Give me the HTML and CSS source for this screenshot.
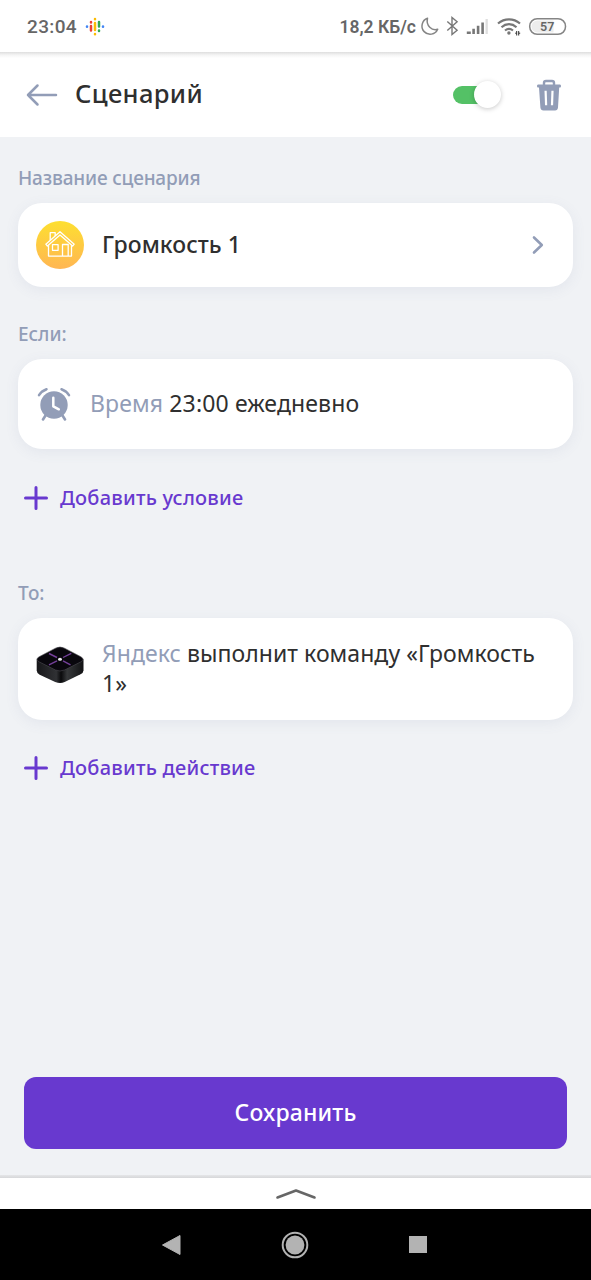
FILE: index.html
```html
<!DOCTYPE html>
<html lang="ru">
<head>
<meta charset="utf-8">
<title>Сценарий</title>
<link rel="stylesheet" href="styles.css">
</head>
<body>
<div class="screen">
  <div class="status">
    <span class="clock">23:04</span>
    <svg class="assistant" width="20" height="20" viewBox="0 0 20 20" fill="none" stroke-width="2.500" stroke-linecap="round">
      <path d="M2 9.500v.2" stroke="#4285f4"/><path d="M18 9.500v.2" stroke="#4285f4"/>
      <path d="M6 5v.5M6 9v4.500" stroke="#e94235"/>
      <path d="M10 2v.2M10 6v7M10 17v.2" stroke="#fbbc04"/>
      <path d="M14 5v4.500M14 13.400v.5" stroke="#34a853"/>
    </svg>
    <span class="speed">18,2 КБ/с</span>
    <svg class="sysicons" width="150" height="24" viewBox="418 15 150 24" fill="none">
      <path d="M427.500 18.300a8.200 8.200 0 1 0 10.200 11c-5.800 1.800-12-3.500-10.200-11z" stroke="#858585" stroke-width="1.500" stroke-linejoin="round"/>
      <path d="M447.300 21.500l9.800 8.700-5.100 4.300v-17l5.100 4.300-9.800 8.700" stroke="#777" stroke-width="1.400"/>
      <path d="M466.800 31.500h4v2.500h-4zM472.300 28.800h2.600v5.200h-2.600zM476.800 25.800h2.600v8.200h-2.600zM481.300 22.500h2.600v11.500h-2.600z" fill="#777"/>
      <path d="M485.500 19h2.300v15h-2.300z" fill="#dedede"/>
      <g stroke="#777" stroke-width="2.200"><path d="M498 23.500c6.500-5.500 15.500-5.500 22 0"/><path d="M501.500 27.200c4.500-4 10.500-4 15 0"/><path d="M505 30.500c2.700-2.200 5.300-2.200 8 0"/></g>
      <circle cx="508.900" cy="33" r="1.700" fill="#777"/>
      <path d="M516.700 31v4.500M518.700 31v4.500M515.200 33.200h1.500M518.700 33.200h1.500" stroke="#333" stroke-width="1"/>
      <rect x="529.700" y="18.700" width="35.800" height="15.600" rx="7.500" fill="#fff" stroke="#858585" stroke-width="1.500"/>
      <path d="M531.500 26.500a6 6 0 0 1 6-6h16v12h-16a6 6 0 0 1-6-6z" fill="#ededed"/>
      <text class="battery" x="547.200" y="31.300" text-anchor="middle">57</text>
    </svg>
  </div>

  <header class="appbar">
    <svg class="back" width="32" height="24" viewBox="0 0 32 24" fill="none" stroke="#929db7" stroke-width="2.500" stroke-linecap="round" stroke-linejoin="round"><path d="M30 12H2M11.500 2.500L2 12l9.500 9.500"/></svg>
    <h1 class="title">Сценарий</h1>
    <div class="switch"><div class="knob"></div></div>
    <svg class="trash" width="26" height="32" viewBox="0 0 26 32" fill="none">
      <path d="M8 6V3.800Q8 2 10 2h6q2 0 2 1.800V6" stroke="#929db7" stroke-width="2.400"/>
      <path d="M2 5.500h22q1 0 1 1.500t-1 1.500h-.8L22 28.500Q21.700 31.500 19 31.500H7.500Q4.700 31.500 4.400 28.500L3 8.500h-1q-1 0-1-1.500t1-1.500z" fill="#929db7"/>
      <path d="M9.600 11.800l.5 14.500M16.500 11.800l-.5 14.500" stroke="#fff" stroke-width="2.200"/>
    </svg>
  </header>

  <main class="content">
    <p class="label label-name">Название сценария</p>
    <section class="card card-name">
      <svg class="house" width="48" height="48" viewBox="0 0 48 48" fill="none">
        <defs><linearGradient id="sun" x1="0" y1="0" x2="0" y2="1"><stop offset="0" stop-color="#fddf30"/><stop offset="1" stop-color="#ffb653"/></linearGradient></defs>
        <circle cx="24" cy="24" r="24" fill="url(#sun)"/>
        <g stroke="#fff" stroke-width="1.300" stroke-linejoin="round">
          <path d="M12.500 24.300v10.800h23V24.300M14.200 19V11.700h5v3.200"/>
          <path d="M24 10.800L9.800 23.200l1.600 1.900L24 14l12.600 11.100 1.600-1.900z"/>
          <path d="M16.500 23.700h5.600v5.600h-5.600zM26.500 35V23.500h5.700V35"/>
        </g>
      </svg>
      <span class="name">Громкость 1</span>
      <svg class="chevron" width="14" height="20" viewBox="0 0 14 20" fill="none" stroke="#929db7" stroke-width="2.600" stroke-linecap="round" stroke-linejoin="round"><path d="M3 2.500l7.800 7.500L3 17.500"/></svg>
    </section>

    <p class="label label-if">Если:</p>
    <section class="card card-if">
      <svg class="alarm" width="34" height="34" viewBox="0 0 34 34" fill="none" stroke="#929db7" stroke-linecap="round">
        <circle cx="17" cy="18" r="13.700" fill="#929db7" stroke="none"/>
        <path d="M2 8.200Q4.500 4 9.500 2.200M32 8.200Q29.500 4 24.500 2.200" stroke-width="2.500"/>
        <path d="M8.500 28.500L6 32.500M25.500 28.500l2.500 4" stroke-width="2.600"/>
        <path d="M16.300 10.700v8.600l5.500 3" stroke="#fff" stroke-width="2.500" stroke-linejoin="round"/>
      </svg>
      <p class="body"><span class="muted">Время</span> <span>23:00 ежедневно</span></p>
    </section>
    <div class="add add-if">
      <svg class="plus" width="24" height="24" viewBox="0 0 24 24" stroke="#6839cf" stroke-width="3" stroke-linecap="round"><path d="M12 1.500v21M1.500 12h21"/></svg>
      <span class="add-text">Добавить условие</span>
    </div>

    <p class="label label-then">То:</p>
    <section class="card card-then">
      <svg class="station" width="48" height="38" viewBox="0 0 48 38">
        <defs><linearGradient id="side" x1="0" y1="0" x2="1" y2="0"><stop offset="0" stop-color="#17171a"/><stop offset=".42" stop-color="#303134"/><stop offset=".52" stop-color="#09090b"/><stop offset=".65" stop-color="#36383a"/><stop offset="1" stop-color="#121214"/></linearGradient></defs>
        <path d="M.7 13.500v11q0 2.500 3 4.200l15.500 7.200q5 2 9.500 0l15.800-7.700q3-1.500 3-4v-11z" fill="url(#side)"/>
        <path d="M3.200 10.700L19.500 2.200Q24-.2 28.500 2.200l16.300 8.500q4.500 2.600 0 5.200L28.500 24q-4.500 2-9 0L3.200 15.900q-4.500-2.600 0-5.200z" fill="#09070d" stroke="#4b4c50" stroke-width=".6"/>
        <path d="M13 7.500l8 4M27 14.800l7.500 4M35.300 7.300L27 11.500M21 14.900l-8 4" stroke="#74409a" stroke-width="1.400"/>
        <ellipse cx="24" cy="13.200" rx="2" ry="1.500" fill="#f0eef3"/>
      </svg>
      <p class="body"><span class="muted">Яндекс</span> выполнит команду «Громкость<br>1»</p>
    </section>
    <div class="add add-then">
      <svg class="plus" width="24" height="24" viewBox="0 0 24 24" stroke="#6839cf" stroke-width="3" stroke-linecap="round"><path d="M12 1.500v21M1.500 12h21"/></svg>
      <span class="add-text">Добавить действие</span>
    </div>

    <button class="save">Сохранить</button>
  </main>

  <div class="drawer">
    <svg width="42" height="14" viewBox="0 0 42 14" fill="none" stroke="#666" stroke-width="2.600" stroke-linecap="round" stroke-linejoin="round"><path d="M2.500 10.500L21 3.500l18.500 7"/></svg>
  </div>
  <nav class="navbar">
    <svg width="20" height="22" viewBox="0 0 20 22"><path d="M1.500 11L19 1.500v19z" fill="#b3b3b3" stroke="#b3b3b3" stroke-linejoin="round"/></svg>
    <svg width="28" height="28" viewBox="0 0 28 28"><circle cx="14" cy="14" r="12.300" fill="none" stroke="#b3b3b3" stroke-width="2"/><circle cx="14" cy="14" r="9.400" fill="#b3b3b3"/></svg>
    <svg width="20" height="22" viewBox="0 0 20 22"><path d="M1 2h18v17H1z" fill="#b3b3b3"/></svg>
  </nav>
</div>
</body>
</html>
```
FILE: styles.css
```css
* { box-sizing: border-box; margin: 0; }
body {
  font-family: "Noto Sans", "Open Sans", sans-serif;
  color: #2f2f2f;
  background: #f0f2f5;
}
svg { display: block; flex: none; }
.screen { width: 591px; height: 1280px; display: flex; flex-direction: column; overflow: hidden; background: #f0f2f5; }

.status {
  height: 52px;
  flex: none;
  display: flex;
  align-items: center;
  padding: 2px 23px 0 27px;
  background: #fff;
  font-family: Roboto, sans-serif;
  color: #666;
}
.clock { font-size: 19px; font-weight: 500; letter-spacing: .35px; padding-bottom: 1px; }
.assistant { margin-left: 8px; }
.speed { margin-left: auto; font-size: 17.500px; font-weight: 600; white-space: nowrap; margin-right: 2px; }
.battery { font-size: 12.500px; font-weight: 600; fill: #666; }

.appbar {
  height: 85px;
  flex: none;
  display: flex;
  align-items: center;
  padding: 0 29px 0 26px;
  background: linear-gradient(#dedede, #f4f4f4 3px, #fff 6px);
}
.title { margin-left: 17px; padding-bottom: 3px; font-size: 25.500px; line-height: 34px; font-weight: 500; letter-spacing: .35px; }
.switch { width: 48px; height: 18px; margin-left: auto; border-radius: 9px; background: linear-gradient(90deg, #54c166 70%, transparent 70%); display: flex; justify-content: flex-end; align-items: center; }
.knob { width: 27px; height: 27px; flex: none; border-radius: 50%; background: #fff; box-shadow: 0 1px 5px rgba(0, 0, 0, .22); }
.trash { margin-left: 35px; }

.content { flex: 1; display: flex; flex-direction: column; padding: 0 18px; }
.label { font-size: 19px; line-height: 26px; font-weight: 500; color: #929db7; }
.label-name { margin-top: 28px; letter-spacing: -.18px; }
.label-if { margin-top: 34px; }
.card {
  display: flex;
  align-items: center;
  width: 555px;
  border-radius: 24px;
  background: #fff;
  box-shadow: 0 3px 14px rgba(100, 110, 160, .09);
}
.card-name { height: 84px; margin-top: 12px; padding: 0 28px 0 18px; }
.name { margin-left: 18px; padding-bottom: 2px; font-size: 23px; font-weight: 500; letter-spacing: .08px; }
.chevron { margin-left: auto; }
.card-if { height: 90px; margin-top: 12px; padding-left: 19px; }
.card-if .body { margin-left: 19px; letter-spacing: .13px; }
.card-then { height: 102px; margin-top: 12px; padding-left: 18px; }
.station { margin-top: -9px; }
.card-then .body { margin-left: 18px; white-space: nowrap; letter-spacing: .06px; }
.body { padding-bottom: 2px; font-size: 23px; line-height: 30px; }
.muted { color: #929db7; }
.add { display: flex; align-items: center; gap: 12px; height: 30px; padding-left: 6px; font-size: 20px; font-weight: 500; letter-spacing: .22px; color: #6839cf; }
.add-text { padding-bottom: 2px; }
.add-if { margin-top: 34px; }
.label-then { margin-top: 67px; }
.add-then { margin-top: 33px; }
.save {
  height: 72px;
  margin: auto 6px 26px;
  padding: 0 0 2px;
  border: 0;
  border-radius: 12px;
  background: #6839cf;
  color: #fff;
  font: 500 23px "Noto Sans", sans-serif;
  letter-spacing: .15px;
}

.drawer { height: 34px; flex: none; display: flex; justify-content: center; align-items: center; padding-top: 4px; background: linear-gradient(#e5e6e8, #d6d7d9 3px, #fff 3px); }
.navbar { height: 71px; flex: none; display: flex; align-items: center; padding-left: 161px; gap: 100px; background: #000; }
.navbar svg:last-child { margin-left: -1px; }
```
